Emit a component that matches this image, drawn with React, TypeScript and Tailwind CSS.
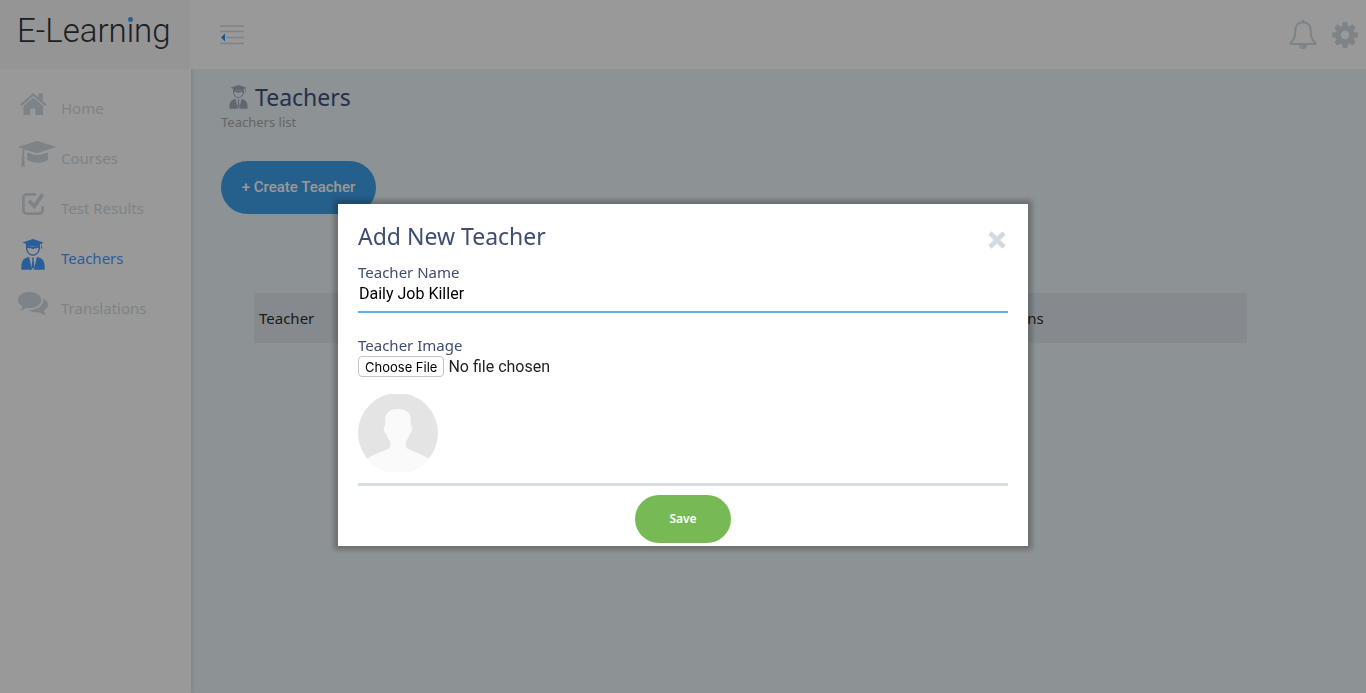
import { FormEvent, ReactNode, useState } from "react";

interface IconProps {
  className?: string;
}

function HomeIcon({ className }: IconProps) {
  return (
    <svg viewBox="0 0 27 22" fill="currentColor" className={className} aria-hidden="true">
      <path d="M13.200 0 0 11.200l1.500 1.700L13.200 3.100l11.900 9.800 1.500-1.700-3.800-3.300V.2h-4.300v4.200z" />
      <path d="M13.200 4.700 3.500 12.800V22h6.800v-6.500h5V22h7.800v-9.200z" />
    </svg>
  );
}

function CoursesIcon({ className }: IconProps) {
  return (
    <svg viewBox="0 0 38 26" fill="currentColor" className={className} aria-hidden="true">
      <path d="M19.200 0 38.500 5.900 19.200 12.200 6.500 8.400 6 15.500l1 1.500-.8 1.500.7 7H3.200l.8-7-.8-1.500 1-1.500.7-7.700L0 5.900z" />
      <path d="M9.200 11.500c3.600 1 7 2.500 10.300 2.500s6.700-1.500 10.400-2.500v7.200c-2.300 2-6 3-10.400 3s-8.100-1-10.300-3z" />
    </svg>
  );
}

function ChatIcon({ className }: IconProps) {
  return (
    <svg viewBox="0 0 30 24" fill="currentColor" className={className} aria-hidden="true">
      <path d="M11.700 0C18 0 23.400 3.500 23.400 8.100S18 16.200 11.700 16.200c-1.200 0-2.300-.1-3.400-.4-2 1.900-4.200 2.700-6.700 2.800 1.500-1.200 2.500-2.500 2.700-4.300C1.600 12.800 0 10.600 0 8.100 0 3.500 5.300 0 11.700 0z" />
      <path d="M25.300 6.300c2.800 1.400 4.700 3.700 4.700 6.300 0 2.500-1.500 4.600-4 6 .2 1.700 1 3.100 2.400 4.400-2.600-.1-4.700-1-6.500-2.800-4 .7-8.200-.1-11-2 6.900.3 14.400-3.600 14.400-10.100z" />
    </svg>
  );
}

function TeacherIcon({ className }: IconProps) {
  return (
    <svg viewBox="0 0 24 31" fill="currentColor" className={className} aria-hidden="true">
      <path d="M12 0 1.500 3.600 5 5v2.200h14V5l1.400-.5V8l-.6 1.600h1.800L21 8V4.300l1.500-.7z" />
      <path d="M5 6.500c-.8 5 2.200 10.300 7 10.300s7.800-5.300 7-10.300h-1c-1 1.500-4 .3-6 1.300-2-1-5 .2-6-1.300zm1.500 2.500c1.700.2 3.700-.2 5.500 1.300 1.800-1.500 3.800-1.100 5.500-1.300.2 3.500-2.100 6.500-5.500 6.500S6.300 12.500 6.500 9z" fillRule="evenodd" />
      <path d="M8 17.800 11.200 30.700H.3v-2.500c0-4.500 1.200-7.700 4-8.900zM16 17.800l-3.200 12.900h10.900v-2.500c0-4.500-1.200-7.700-4-8.900z" />
      <path d="M10.800 18.700h2.400l-.6 2 .8 7.500L12 29.800l-1.400-1.600.8-7.500z" />
    </svg>
  );
}

function CheckIcon({ className }: IconProps) {
  return (
    <svg viewBox="0 0 22 22" fill="none" stroke="currentColor" className={className} aria-hidden="true">
      <path d="M13 1.400H4.500a3.100 3.100 0 0 0-3.100 3.100v13a3.100 3.100 0 0 0 3.100 3.100h13a3.100 3.100 0 0 0 3.100-3.100V14" strokeWidth="2.600" strokeLinecap="round" />
      <path d="m8.200 9 4.300 4.300L19.600 2.800" strokeWidth="3.800" strokeLinecap="square" />
    </svg>
  );
}

function MenuIcon() {
  return (
    <svg width="24" height="20" viewBox="0 0 24 20" fill="none" aria-hidden="true">
      <path d="M0 1h24M0 6.500h24M6 12.500h18M0 18.500h24" stroke="#d1dbe1" strokeWidth="1.500" />
      <path d="M1 12.500 5 8.500v8z" fill="#2296f3" />
    </svg>
  );
}

function BellIcon() {
  return (
    <svg width="28" height="31" viewBox="0 0 28 31" fill="none" stroke="currentColor" aria-hidden="true">
      <path d="M14 3.200c-5.200 0-7.700 3.600-7.700 8.300 0 6.500-1.300 9-4.900 12.700v.9h25.200v-.9c-3.600-3.700-4.900-6.200-4.900-12.700 0-4.700-2.500-8.300-7.700-8.300z" strokeWidth="2" strokeLinejoin="round" />
      <circle cx="14" cy="1.900" r="1.500" fill="currentColor" stroke="none" />
      <path d="M10 26h8a4 4 0 0 1-8 0z" fill="currentColor" stroke="none" />
      <path d="M12 26.500a2 2 0 0 0 2 1.700" stroke="#fff" strokeWidth=".8" />
    </svg>
  );
}

const gearTeeth = [0, 45, 90, 135, 180, 225, 270, 315];

function GearIcon() {
  return (
    <svg width="26" height="26" viewBox="0 0 26 26" fill="currentColor" aria-hidden="true">
      <circle cx="13" cy="13" r="6.900" fill="none" stroke="currentColor" strokeWidth="5.400" />
      {gearTeeth.map((angle) => (
        <path key={angle} d="M10 5 10.600.3q2.400-.4 4.800 0L16 5z" transform={`rotate(${angle} 13 13)`} />
      ))}
    </svg>
  );
}

function Avatar() {
  return (
    <svg width="80" height="80" viewBox="0 0 80 80" className="mt-4 block" role="img" aria-label="Teacher image preview">
      <defs>
        <clipPath id="avatar">
          <circle cx="40" cy="40" r="40" />
        </clipPath>
      </defs>
      <g clipPath="url(#avatar)">
        <path d="M0 1h80v78H0z" fill="#e4e4e4" />
        <path
          d="M40 16c-8 0-12.800 3.500-12.800 11v6c-1.800.3-1.700 3-1 5.300.5 1.800 1.200 2.600 2.300 2.800.5 3 1.700 5.400 3.700 7.500V54c0 2-9 4.500-14.200 7C12 64 8 66 5 69v10h70V69c-3-3-7-5-13-8-5-2.500-14.200-5-14.200-7v-5.400c2-2.100 3.200-4.500 3.700-7.500 1.100-.2 1.800-1 2.300-2.800.7-2.300.8-5-1-5.300v-6C52.800 19.500 48 16 40 16z"
          fill="#fafafa"
        />
      </g>
    </svg>
  );
}

interface NavItem {
  label: string;
  icon: ReactNode;
  active?: boolean;
}

const navItems: NavItem[] = [
  { label: "Home", icon: <HomeIcon className="ml-[2px] h-[22px] w-[27px]" /> },
  { label: "Courses", icon: <CoursesIcon className="h-[26px] w-[38px]" /> },
  { label: "Test Results", icon: <CheckIcon className="ml-1 size-[22px]" /> },
  { label: "Teachers", icon: <TeacherIcon className="ml-[3px] h-[31px] w-6" />, active: true },
  { label: "Translations", icon: <ChatIcon className="h-6 w-[30px]" /> },
];

function Sidebar() {
  return (
    <nav className="w-[191px] shrink-0 bg-white pt-3 shadow-[1px_0_4px_rgba(0,0,0,0.12)]">
      {navItems.map((item) => (
        <a
          key={item.label}
          href="#"
          className={`flex h-[50px] items-center pl-[18px] text-[15px] ${item.active ? "text-[#469dff]" : "text-[#d1dbe1]"}`}
        >
          <span className="flex w-[43px] items-center pb-1">{item.icon}</span>
          <span className="pt-1">{item.label}</span>
        </a>
      ))}
    </nav>
  );
}

interface TeacherDialogProps {
  onClose(): void;
}

function TeacherDialog({ onClose }: TeacherDialogProps) {
  const [name, setName] = useState("Daily Job Killer");

  const handleSubmit = (event: FormEvent<HTMLFormElement>) => {
    event.preventDefault();
    if (name.trim()) onClose();
  };

  return (
    <div className="fixed inset-0 z-20 flex items-start justify-center bg-black/40 pt-[204px]">
      <form
        role="dialog"
        aria-labelledby="dialog-title"
        onSubmit={handleSubmit}
        className="w-full max-w-[690px] bg-white px-5 pt-4 pb-[3px] text-[#3f4d71] shadow-[0_0_5px_4px_rgba(0,0,0,0.25)]"
      >
        <div className="flex items-center justify-between">
          <h2 id="dialog-title" className="text-[23px] leading-8">Add New Teacher</h2>
          <button type="button" aria-label="Close" onClick={onClose} className="mt-2 mr-[2px] text-[#d1dbe3]">
            <svg width="18" height="18" viewBox="0 0 18 18" fill="none" stroke="currentColor" strokeWidth="4.600" strokeLinejoin="round">
              <path d="m2 2 14 14M16 2 2 16" />
            </svg>
          </button>
        </div>
        <label htmlFor="name" className="mt-[10px] block text-[15px] leading-[21px]">Teacher Name</label>
        <input
          id="name"
          value={name}
          onChange={(event) => setName(event.target.value)}
          className="block w-full border-b-2 border-[#5faeee] px-px pb-[6px] font-[Roboto,sans-serif] text-base leading-[22px] text-black outline-none"
        />
        <label htmlFor="image" className="mt-[22px] block text-[15px] leading-[21px]">Teacher Image</label>
        <input
          id="image"
          type="file"
          className="block h-[21px] w-full font-[Roboto,sans-serif] text-base leading-5 text-[#222] file:mr-1 file:h-[21px] file:rounded file:border file:border-solid file:border-[#c4c4c4] file:bg-white file:px-[6px] file:font-[Inter,sans-serif] file:text-[13px] file:leading-[18px] file:text-black"
        />
        <Avatar />
        <hr className="mt-[10px] border-t-3 border-[#d6dee4]" />
        <div className="mt-[9px] flex justify-center">
          <button type="submit" className="h-12 w-24 rounded-full bg-[#77ba55] text-xs font-semibold text-white">
            Save
          </button>
        </div>
      </form>
    </div>
  );
}

export default function App() {
  const [open, setOpen] = useState(true);

  return (
    <div className="flex min-h-screen flex-col bg-[#ebf3f8] font-['Noto_Sans',sans-serif]">
      <header className="relative z-10 flex h-[69px] items-center bg-white text-[#d1dbe1]">
        <div className="h-full w-[190px] bg-[#f9f9f9] pl-[17px] font-[Roboto,sans-serif] text-[33px] leading-[62px] font-light text-[#30363a]">
          E-Learn
          <span className="relative">
            i
            <span className="absolute top-[6px] left-px size-[5px] rounded-full bg-[#46a3e8]" />
          </span>
          ng
        </div>
        <button type="button" aria-label="Toggle menu" className="ml-[30px]">
          <MenuIcon />
        </button>
        <div className="mr-2 ml-auto flex items-center gap-[15px]">
          <button type="button" aria-label="Notifications">
            <BellIcon />
          </button>
          <button type="button" aria-label="Settings">
            <GearIcon />
          </button>
        </div>
      </header>
      <div className="flex flex-1">
        <Sidebar />
        <main className="min-w-0 flex-1 px-[30px] pt-3">
          <h1 className="flex items-center gap-[7px] pl-2 text-[23px] leading-8 text-[#41507d]">
            <TeacherIcon className="h-6 w-[19px] text-[#9daeb8]" />
            Teachers
          </h1>
          <p className="text-[13px] leading-[18px] text-[#a8a8a8]">Teachers list</p>
          <button
            type="button"
            onClick={() => setOpen(true)}
            className="mt-[30px] h-[53px] w-[155px] rounded-full bg-[#3f9ee8] font-[Roboto,sans-serif] text-[15px] font-medium text-white"
          >
            + Create Teacher
          </button>
          <div className="mt-[79px] mr-[89px] ml-[33px]">
            <table className="w-full table-fixed bg-[#dfe7ed] text-left text-[15px] text-[#2c2c2c]">
              <thead>
                <tr className="h-[50px]">
                  <th className="w-[738px] pl-[5px] font-normal">Teacher</th>
                  <th className="font-normal">Actions</th>
                </tr>
              </thead>
            </table>
          </div>
        </main>
      </div>
      {open ? <TeacherDialog onClose={() => setOpen(false)} /> : null}
    </div>
  );
}
